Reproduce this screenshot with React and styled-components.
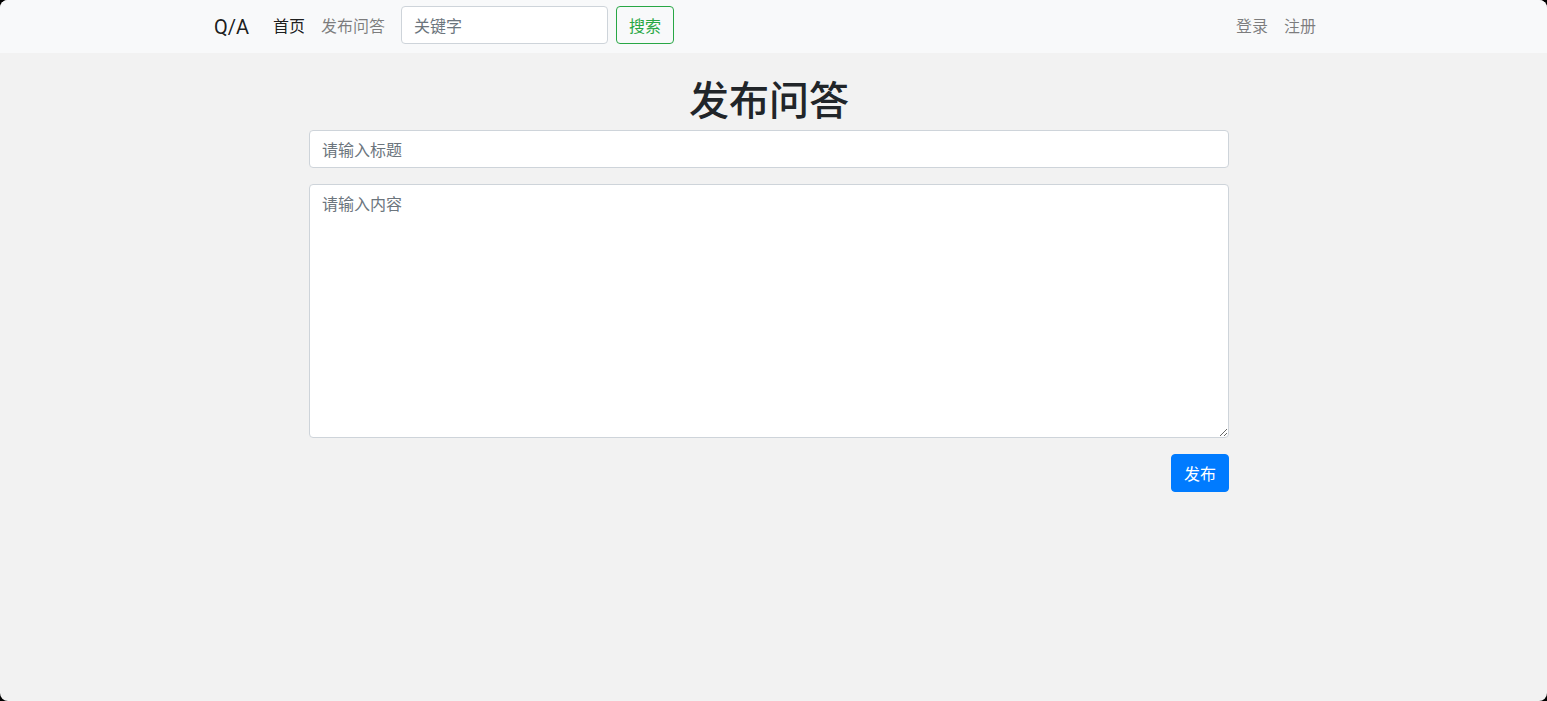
import styled, { createGlobalStyle } from "styled-components"

const GlobalStyle = createGlobalStyle`
  html, body {
    margin: 0;
    padding: 0;
    background: #000;
  }
  body {
    font-family: "Liberation Sans", "Noto Sans CJK SC", sans-serif;
    color: #212529;
  }
  * {
    box-sizing: border-box;
  }
`

const Page = styled.div`
  height: 100vh;
  background: #f2f2f2;
  border-radius: 8px;
  overflow: hidden;
  padding-right: 9px;
`

const Navbar = styled.nav`
  height: 53px;
  background: #f8f9fa;
  margin-right: -9px;
  padding-right: 9px;
`

const NavInner = styled.div`
  width: 1140px;
  height: 100%;
  margin: 0 auto;
  padding: 0 15px;
  display: flex;
  align-items: center;
`

const Brand = styled.a`
  font-family: "Roboto", "Liberation Sans", sans-serif;
  font-size: 20px;
  color: rgba(0, 0, 0, 0.9);
  margin-right: 16px;
  margin-top: 1px;
  text-decoration: none;
`

const NavLink = styled.a`
  display: block;
  font-family: "Noto Sans CJK SC", sans-serif;
  font-size: 16px;
  padding: 0 8px 4px;
  color: ${(p) => (p.active ? "rgba(0, 0, 0, 0.9)" : "rgba(0, 0, 0, 0.5)")};
  text-decoration: none;
`

const SearchForm = styled.form`
  display: flex;
  align-items: center;
  margin-left: 8px;
  margin-top: -3px;
`

const SearchInput = styled.input`
  width: 207px;
  height: 38px;
  padding: 6px 12px;
  font-family: "Noto Sans CJK SC", sans-serif;
  font-size: 16px;
  border: 1px solid #ced4da;
  border-radius: 4px;
  background: #fff;
  margin-right: 8px;
  &::placeholder {
    color: #6c757d;
  }
`

const OutlineButton = styled.button`
  height: 38px;
  padding: 0 12px;
  font-family: "Noto Sans CJK SC", sans-serif;
  font-size: 16px;
  color: #28a745;
  background: transparent;
  border: 1px solid #28a745;
  border-radius: 4px;
`

const NavRight = styled.div`
  margin-left: auto;
  display: flex;
`

const Main = styled.main`
  width: 920px;
  margin: 0 auto;
  padding-top: 21px;
  display: flex;
  flex-direction: column;
`

const Title = styled.h1`
  margin: 0 0 8px;
  text-align: center;
  font-family: "Noto Sans CJK SC", sans-serif;
  font-size: 40px;
  font-weight: 500;
  line-height: 48px;
  color: #212529;
`

const Field = styled.input`
  height: 38px;
  padding: 6px 12px;
  font-family: "Noto Sans CJK SC", sans-serif;
  font-size: 16px;
  border: 1px solid #ced4da;
  border-radius: 4px;
  background: #fff;
  margin-bottom: 16px;
  &::placeholder {
    color: #6c757d;
  }
`

const Area = styled.textarea`
  height: 254px;
  padding: 6px 12px;
  font-family: "Noto Sans CJK SC", sans-serif;
  font-size: 16px;
  line-height: 24px;
  border: 1px solid #ced4da;
  border-radius: 4px;
  background: #fff;
  margin-bottom: 16px;
  resize: vertical;
  &::placeholder {
    color: #6c757d;
  }
`

const Actions = styled.div`
  display: flex;
  justify-content: flex-end;
`

const PrimaryButton = styled.button`
  height: 38px;
  padding: 0 12px;
  font-family: "Noto Sans CJK SC", sans-serif;
  font-size: 16px;
  color: #fff;
  background: #007bff;
  border: 1px solid #007bff;
  border-radius: 4px;
`

export default function App() {
  return (
    <>
      <GlobalStyle />
      <Page>
        <Navbar>
          <NavInner>
            <Brand href="#">Q/A</Brand>
            <NavLink href="#" active>
              首页
            </NavLink>
            <NavLink href="#">发布问答</NavLink>
            <SearchForm onSubmit={(e) => e.preventDefault()}>
              <SearchInput placeholder="关键字" />
              <OutlineButton type="submit">搜索</OutlineButton>
            </SearchForm>
            <NavRight>
              <NavLink href="#">登录</NavLink>
              <NavLink href="#">注册</NavLink>
            </NavRight>
          </NavInner>
        </Navbar>
        <Main>
          <Title>发布问答</Title>
          <Field placeholder="请输入标题" />
          <Area placeholder="请输入内容" />
          <Actions>
            <PrimaryButton>发布</PrimaryButton>
          </Actions>
        </Main>
      </Page>
    </>
  )
}
